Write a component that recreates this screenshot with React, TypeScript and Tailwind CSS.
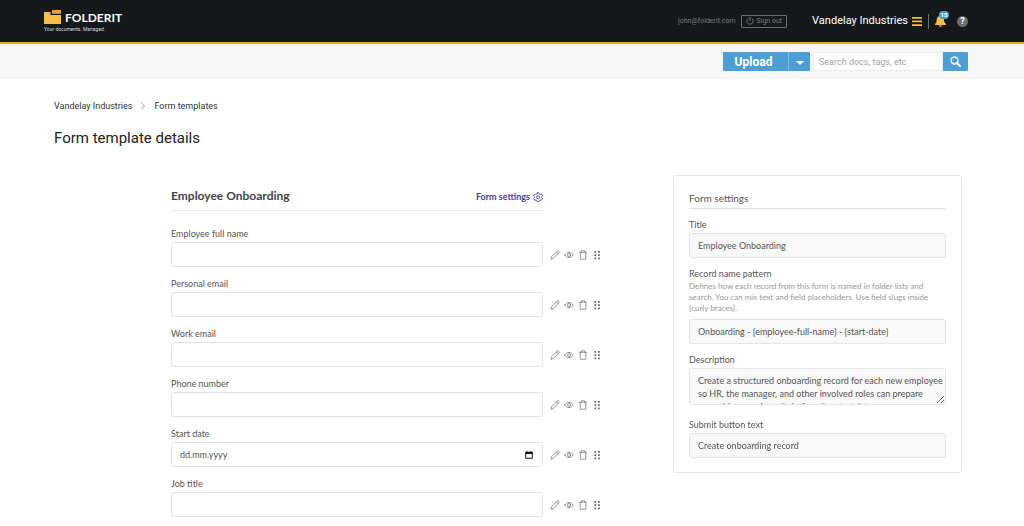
import { useState } from "react";
import type { ReactNode } from "react";

const fields = [
  { id: "employee-full-name", label: "Employee full name", type: "text" },
  { id: "personal-email", label: "Personal email", type: "email" },
  { id: "work-email", label: "Work email", type: "email" },
  { id: "phone-number", label: "Phone number", type: "tel" },
  { id: "start-date", label: "Start date", type: "date" },
  { id: "job-title", label: "Job title", type: "text" },
];

function Logo() {
  return (
    <a href="#" className="flex flex-col text-white">
      <span className="flex items-end gap-1">
        <svg width="17" height="14" viewBox="0 0 17 14" aria-hidden="true">
          <path d="M0 2h6.500v3H17v9H0z" fill="#f3bd48" />
          <path d="M8 0h9v3.800H8z" fill="#e9a040" />
        </svg>
        <span className="font-['Lato',sans-serif] text-[12px] leading-[12px] font-bold">
          FOLDERIT
        </span>
      </span>
      <span className="mt-[2px] text-[5px] leading-[6px] text-gray-300">
        Your documents. Managed.
      </span>
    </a>
  );
}

function Header() {
  return (
    <header className="flex h-[44px] items-center justify-between border-b-2 border-[#e5ab35] bg-[#15191c] pr-[56px] pl-[44px]">
      <Logo />
      <div className="flex items-center">
        <span className="text-[7px] text-[#77797b]">john@folderit.com</span>
        <button className="ml-[5px] flex h-[13px] items-center gap-[3px] rounded-[1px] border border-[#6b6e70] px-1 text-[7px] text-[#77797b]">
          <svg width="8" height="8" viewBox="0 0 8 8" fill="none" stroke="currentColor" strokeLinecap="round" aria-hidden="true">
            <path d="M4 .6v3.200M2.200 1.300a3.200 3.200 0 1 0 3.600 0" strokeWidth=".9" />
          </svg>
          Sign out
        </button>
        <button className="ml-[25px] flex items-center gap-1 text-[11px] text-white">
          Vandelay Industries
          <svg width="10" height="9" viewBox="0 0 10 9" fill="#f3bd48" aria-hidden="true">
            <path d="M0 0h10v1.700H0zM0 3.600h10v1.700H0zM0 7.200h10v1.700H0z" />
          </svg>
        </button>
        <span className="mx-[6px] h-[15px] w-px bg-[#6b6e70]" />
        <button className="relative" aria-label="Notifications">
          <svg width="11" height="12" viewBox="0 0 11 12" fill="#f3bd48" aria-hidden="true">
            <path d="M5 0c.7 0 1 .4 1 1C8.100 1.400 8.800 3 9 5c.1 1.800.7 2.800 2 4v1H0V9c1.300-1.200 1.600-2.200 1.700-4C1.900 3 2.500 1.400 4.300 1c0-.6.2-1 .7-1zM4 10.600h3c0 .8-.6 1.400-1.500 1.400S4 11.400 4 10.600z" />
          </svg>
          <span className="absolute -top-1 left-1 flex h-[8px] w-[10px] items-center justify-center rounded-full bg-[#4c9fd3] text-[6px] leading-none font-bold text-white">
            15
          </span>
        </button>
        <button
          aria-label="Help"
          className="ml-[11px] flex size-[11px] items-center justify-center rounded-full bg-[#6b6d6f] text-[9px] leading-none font-bold text-white"
        >
          ?
        </button>
      </div>
    </header>
  );
}

function Toolbar() {
  return (
    <div className="flex h-[35px] items-center justify-end bg-[#f7f7f7] pr-[56px]">
      <button className="h-[19px] w-[65px] rounded-l-[1px] bg-[#4c9fd3] pr-1 text-[12px] font-bold text-white">
        Upload
      </button>
      <button
        aria-label="More upload options"
        className="flex h-[19px] w-[22px] items-center justify-center rounded-r-[1px] border-l border-[#82bce0] bg-[#4c9fd3]"
      >
        <svg width="8" height="4" viewBox="0 0 8 4" fill="white" className="mt-[2px]" aria-hidden="true">
          <path d="M0 0h8L4 4z" />
        </svg>
      </button>
      <input
        type="search"
        aria-label="Search"
        placeholder="Search docs, tags, etc"
        className="ml-[3px] h-[19px] w-[130px] border border-[#ececec] bg-white px-[5px] text-[9px] outline-none placeholder:text-[#a2a2a2]"
      />
      <button aria-label="Search" className="flex h-[19px] w-[25px] items-center justify-center rounded-r-[1px] bg-[#4c9fd3]">
        <svg width="11" height="11" viewBox="0 0 11 11" fill="none" stroke="white" aria-hidden="true">
          <circle cx="4.500" cy="4.500" r="3.400" strokeWidth="1.500" />
          <path d="M7 7l3 3" strokeWidth="2" strokeLinecap="round" />
        </svg>
      </button>
    </div>
  );
}

function IconButton({ label, children }: { label: string; children: ReactNode }) {
  return (
    <button type="button" aria-label={label} className="flex size-[10px] items-center justify-center">
      <svg
        width="10"
        height="10"
        viewBox="0 0 20 20"
        fill="none"
        stroke="#777"
        strokeWidth="1.500"
        strokeLinecap="round"
        strokeLinejoin="round"
        aria-hidden="true"
      >
        {children}
      </svg>
    </button>
  );
}

function FieldActions() {
  return (
    <div className="flex w-[58px] items-center gap-1 pl-[7px]">
      <IconButton label="Edit">
        <path d="M2 18l1.500-5L14.500 2a1.800 1.800 0 0 1 2.600 0l.9.9a1.800 1.800 0 0 1 0 2.600L7 16.500zM12.500 4l3.500 3.500" />
      </IconButton>
      <IconButton label="Preview">
        <path d="M1.500 10C5.500 3 14.500 3 18.500 10C14.500 17 5.500 17 1.500 10z" />
        <circle cx="10" cy="10" r="3" />
      </IconButton>
      <IconButton label="Delete">
        <path d="M2.500 4.500h15M7 4.500V1.500h6v3M4.500 4.500v14h11v-14" />
      </IconButton>
      <IconButton label="Move">
        <path
          d="M5 2h3.500v3.500H5zM12 2h3.500v3.500H12zM5 8.500h3.500V12H5zM12 8.500h3.500V12H12zM5 15h3.500v3.500H5zM12 15h3.500v3.500H12z"
          fill="#666"
          stroke="none"
        />
      </IconButton>
    </div>
  );
}

function FormField({ id, label, type }: { id: string; label: string; type: string }) {
  const isDate = type === "date";
  return (
    <div>
      <label htmlFor={id} className="block text-[9px] leading-[12px]">
        {label}
      </label>
      <div className="mt-[2px] flex items-center">
        <div className="flex h-[25px] min-w-0 flex-1 items-center rounded-[3px] border border-[#e4e4e4] bg-white">
          <input
            id={id}
            type={isDate ? "text" : type}
            placeholder={isDate ? "dd.mm.yyyy" : undefined}
            className="h-full min-w-0 flex-1 bg-transparent px-2 text-[9px] outline-none placeholder:text-[#555]"
          />
          {isDate && (
            <button type="button" aria-label="Pick a date" className="mr-[9px]">
              <svg width="8" height="8" viewBox="0 0 16 16" aria-hidden="true">
                <path d="M1.500 2.500h13v12h-13z" fill="none" stroke="#111" strokeWidth="2" />
                <path d="M1 2h14v4H1zM3 0h2v2H3zM11 0h2v2h-2z" fill="#111" />
              </svg>
            </button>
          )}
        </div>
        <FieldActions />
      </div>
    </div>
  );
}

function TemplateForm() {
  return (
    <form className="min-w-0 flex-1 pt-[12px]">
      <div className="mr-[58px] flex h-[24px] items-start justify-between border-b border-[#ececec]">
        <h2 className="text-[12px] leading-[18px] font-bold text-[#444]">Employee Onboarding</h2>
        <a href="#form-settings" className="flex items-center gap-[3px] text-[9px] leading-[20px] font-bold text-[#483d9f]">
          Form settings
          <svg width="10" height="10" viewBox="0 0 20 20" fill="none" stroke="currentColor" strokeWidth="1.700" strokeLinejoin="round" aria-hidden="true">
            <path d="M8 1.500h4l.6 2.600 1.800 1 2.500-.8 2 3.500-1.900 1.700v2l1.900 1.700-2 3.500-2.500-.8-1.800 1-.6 2.600H8l-.6-2.600-1.800-1-2.500.8-2-3.500L3 11.500v-2L1.100 7.800l2-3.500 2.500.8 1.800-1z" />
            <circle cx="10" cy="10.500" r="3" />
          </svg>
        </a>
      </div>
      <div className="mt-[17px] flex flex-col gap-[11px]">
        {fields.map((field) => (
          <FormField key={field.id} {...field} />
        ))}
      </div>
    </form>
  );
}

function SettingsInput({ id, label, value, hint }: { id: string; label: string; value: string; hint?: string }) {
  const [text, setText] = useState(value);
  return (
    <div>
      <label htmlFor={id} className="block text-[9px] leading-[12px]">
        {label}
      </label>
      {hint && <p className="mt-px mb-[5px] text-[8px] leading-[11px] text-[#999]">{hint}</p>}
      <input
        id={id}
        value={text}
        onChange={(e) => setText(e.target.value)}
        className="mt-[2px] block h-[25px] w-full rounded-[3px] border border-[#e4e4e4] bg-[#f9f9f9] px-2 text-[9px] outline-none"
      />
    </div>
  );
}

function SettingsPanel() {
  return (
    <aside id="form-settings" className="w-[289px] shrink-0 rounded-[3px] border border-[#e6e6e6] px-[15px] pt-[13px] pb-[14px]">
      <h2 className="border-b border-[#e2e2e2] pb-px text-[10px] leading-[18px]">Form settings</h2>
      <div className="mt-[10px] flex flex-col gap-[10px]">
        <SettingsInput id="title" label="Title" value="Employee Onboarding" />
        <SettingsInput
          id="pattern"
          label="Record name pattern"
          value="Onboarding - {employee-full-name} - {start-date}"
          hint="Defines how each record from this form is named in folder lists and search. You can mix text and field placeholders. Use field slugs inside {curly braces}."
        />
        <div className="pb-1">
          <label htmlFor="description" className="block text-[9px] leading-[12px]">
            Description
          </label>
          <textarea
            id="description"
            defaultValue="Create a structured onboarding record for each new employee so HR, the manager, and other involved roles can prepare everything consistently before the start date."
            className="mt-[2px] block h-[37px] w-full resize-y [scrollbar-width:none] rounded-[3px] border border-[#e4e4e4] bg-[#f9f9f9] pt-[5px] pl-2 text-[9px] leading-[13px] outline-none"
          />
        </div>
        <SettingsInput id="submit-text" label="Submit button text" value="Create onboarding record" />
      </div>
    </aside>
  );
}

export default function App() {
  return (
    <div className="min-h-screen bg-white font-['Roboto',sans-serif] text-[#222]">
      <Header />
      <Toolbar />
      <main className="pr-[62px] pb-[10px] pl-[54px]">
        <nav aria-label="Breadcrumb" className="flex items-center gap-2 pt-[20px] text-[9px] leading-[14px] text-[#333]">
          <a href="#">Vandelay Industries</a>
          <svg width="6" height="8" viewBox="0 0 6 8" fill="none" stroke="#999" aria-hidden="true">
            <path d="M1 .5l3.500 3.500L1 7.500" />
          </svg>
          <a href="#">Form templates</a>
        </nav>
        <h1 className="mt-[15px] text-[15px] leading-[20px]">Form template details</h1>
        <div className="mt-[27px] flex items-start gap-[72px] pl-[117px] font-['Lato',sans-serif] text-[#555]">
          <TemplateForm />
          <SettingsPanel />
        </div>
      </main>
    </div>
  );
}
